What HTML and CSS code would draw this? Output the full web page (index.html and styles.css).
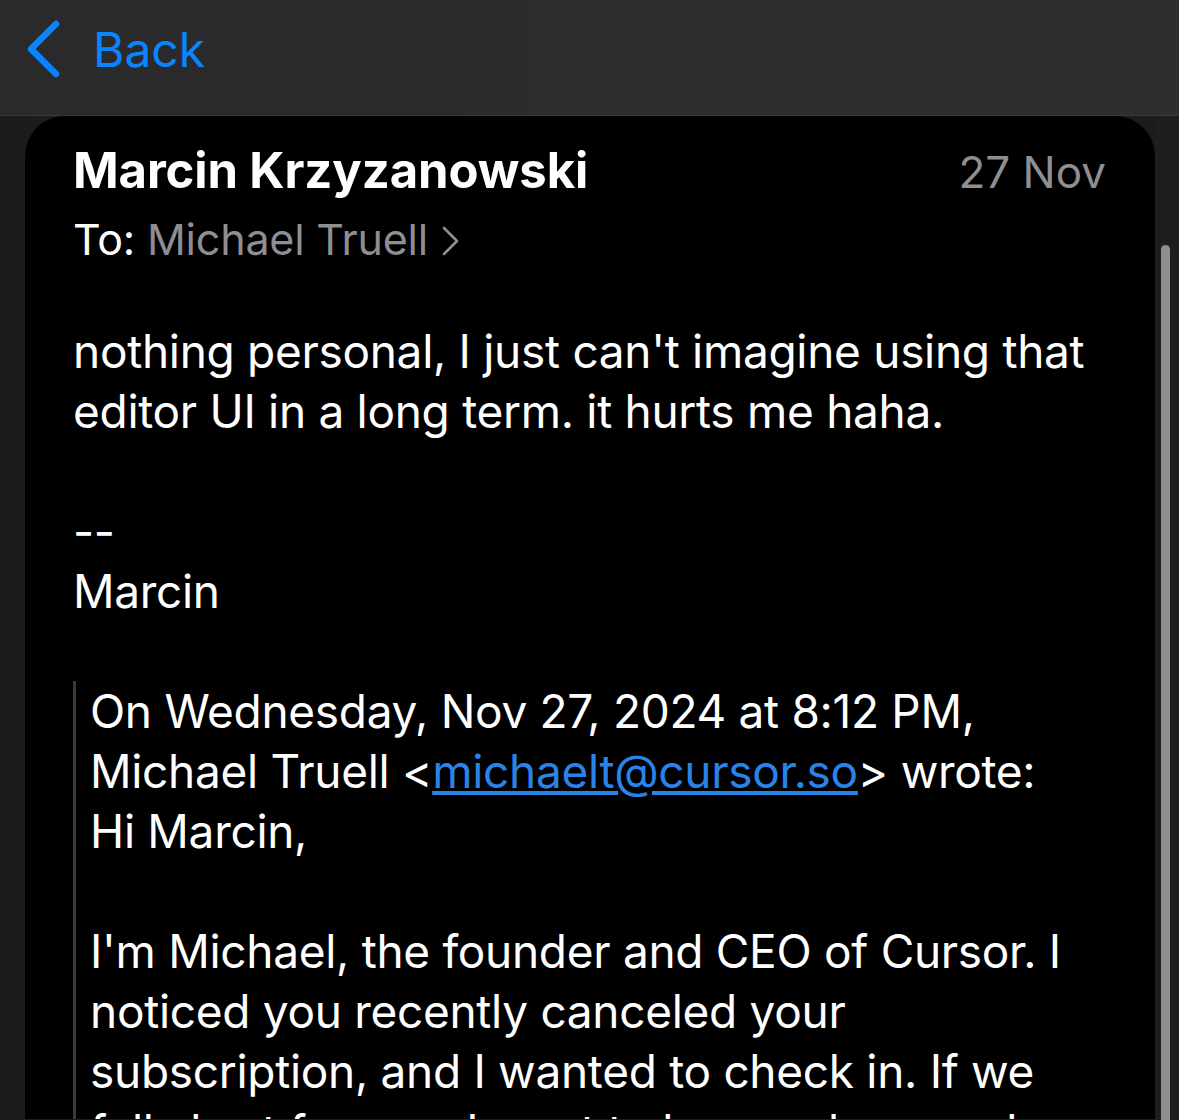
FILE: index.html
```html
<!DOCTYPE html>
<html>

<head>
    <title>Mail</title>
    <meta content="width=device-width, initial-scale=1" name="viewport" />
    <meta http-equiv="Content-Type" content="text/html; charset=utf-8" />
    <link rel="stylesheet" href="styles.css">
</head>

<body>
    <div id="nav">
        <a id="back" href="#">
            <svg width="40" height="60" viewBox="0 0 40 60">
                <path d="M32 4 L7 29 L32 54" fill="none" stroke="#0a84ff" stroke-width="6.5"
                    stroke-linecap="round" stroke-linejoin="round" />
            </svg>
            <span>Back</span>
        </a>
    </div>
    <div id="page">
        <div id="card">
            <div id="head">
                <div id="from-row">
                    <h1>Marcin Krzyzanowski</h1>
                    <span id="date">27 Nov</span>
                </div>
                <div id="to">
                    To: <span class="gray">Michael Truell</span>
                    <svg width="22" height="34" viewBox="0 0 22 34">
                        <path d="M4 4 L17 17 L4 30" fill="none" stroke="#8e8e93" stroke-width="2.6"
                            stroke-linecap="round" stroke-linejoin="round" />
                    </svg>
                </div>
            </div>
            <div id="body">
                <p>nothing personal, I just can't imagine using that editor UI in a long term. it hurts me haha.</p>
                <p class="blank">&nbsp;</p>
                <p>--<br>Marcin</p>
                <p class="blank">&nbsp;</p>
                <blockquote>
                    <p>On Wednesday, Nov 27, 2024 at 8:12 PM, Michael Truell &lt;<a href="#">michaelt@cursor.so</a>&gt; wrote:</p>
                    <p>Hi Marcin,</p>
                    <p class="blank">&nbsp;</p>
                    <p>I'm Michael, the founder and CEO of Cursor. I noticed you recently canceled your subscription, and I wanted to check in. If we fell short for you, I want to know where and how.</p>
                </blockquote>
            </div>
        </div>
        <div id="track">
            <div id="thumb"></div>
        </div>
    </div>
</body>

</html>
```

FILE: styles.css
```css
* {
    margin: 0;
    padding: 0;
}

html,
body {
    background: #1c1c1e;
    color: white;
    font-family: Inter, 'Noto Sans', sans-serif;
    height: 100%;
    overflow: hidden;
    width: 100%;
}

#nav {
    align-items: center;
    background: linear-gradient(to right, #2a2a2c, #2e2e30);
    border-bottom: 1px solid #3a3a3c;
    box-sizing: border-box;
    display: flex;
    height: 116px;
    padding: 0 0 16px 24px;
}

#back {
    align-items: center;
    color: #0a84ff;
    display: flex;
    font-size: 48px;
    text-decoration: none;
}

#back svg {
    margin-right: 29px;
}

#page {
    display: flex;
    height: calc(100% - 117px);
}

#card {
    background: #000;
    border-radius: 40px 40px 0 0;
    flex: 1;
    margin-left: 25px;
    overflow: hidden;
    padding: 22px 49px 0 48px;
}

#from-row {
    align-items: baseline;
    display: flex;
    justify-content: space-between;
}

#from-row h1 {
    font-size: 49px;
    font-weight: 700;
    letter-spacing: -0.1px;
    line-height: 66px;
}

#date {
    color: #8e8e93;
    font-size: 44px;
}

#to {
    align-items: center;
    display: flex;
    font-size: 43px;
    letter-spacing: -0.2px;
    line-height: 56px;
    margin-top: 7px;
}

#to .gray {
    color: #8e8e93;
    margin-left: 12px;
}

#to svg {
    margin-left: 12px;
    margin-top: 4px;
}

#body {
    font-size: 46px;
    letter-spacing: -0.3px;
    line-height: 60px;
    margin-top: 54px;
}

#body a {
    color: #2a84e8;
}

blockquote {
    border-left: 3px solid #3a3a3c;
    padding-left: 14px;
}

#track {
    background: #1e1e20;
    width: 24px;
}

#thumb {
    background: #8e8e8e;
    border-radius: 5px 5px 0 0;
    height: 100%;
    margin: 129px 0 0 6px;
    width: 9px;
}
```
